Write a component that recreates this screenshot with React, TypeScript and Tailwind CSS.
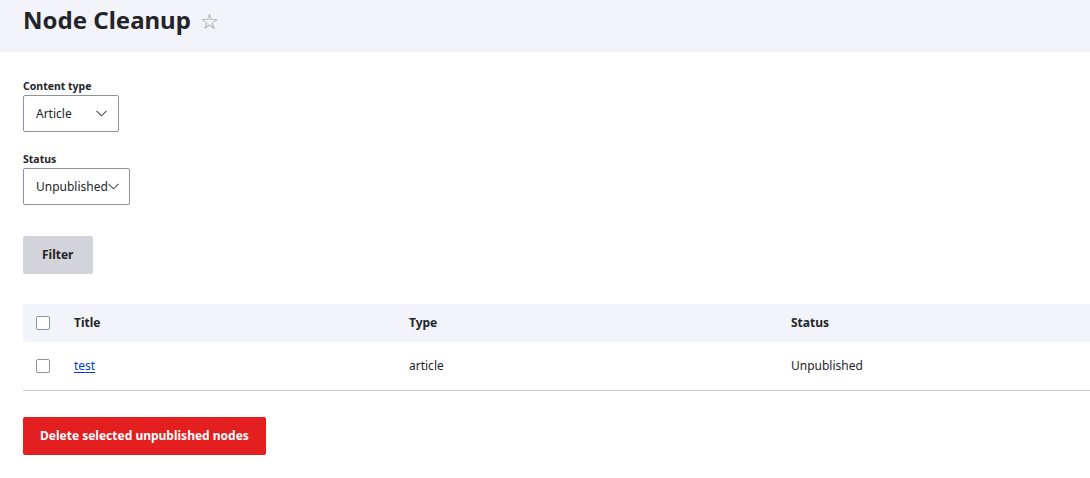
import { useState } from "react";

const font = { fontFamily: '"Noto Sans", "DejaVu Sans", sans-serif' };

function Chevron() {
  return (
    <svg width="11" height="7" viewBox="0 0 11 7" className="shrink-0">
      <path d="M0.5 0.8 L5.5 5.8 L10.5 0.8" fill="none" stroke="#4a4c55" strokeWidth="1.1" />
    </svg>
  );
}

function Select({ value, width }: { value: string; width: string }) {
  return (
    <div
      className={`flex h-[37px] items-center justify-between rounded-[2px] border border-[#8e929c] bg-white pl-[12px] pr-[11px] text-[12px] text-[#232429] ${width}`}
    >
      <span>{value}</span>
      <Chevron />
    </div>
  );
}

function Checkbox({ checked, onChange }: { checked: boolean; onChange: () => void }) {
  return (
    <button
      onClick={onChange}
      className="flex h-[14px] w-[14px] items-center justify-center rounded-[2px] border border-[#8e929c] bg-white"
    >
      {checked && <span className="h-[8px] w-[8px] bg-[#003ecc]" />}
    </button>
  );
}

export default function App() {
  const [all, setAll] = useState(false);
  const [row, setRow] = useState(false);

  return (
    <div className="min-h-[478px] w-full bg-white text-[#232429]" style={font}>
      {/* Page header */}
      <div className="flex h-[52px] items-start bg-[#f3f4f9] pl-[23px] pt-[3px]">
        <h1 className="text-[24px] font-bold leading-[34px]">Node Cleanup</h1>
        <span className="ml-[9px] mt-[1px] text-[21px] leading-[34px] text-[#8d8f98]">☆</span>
      </div>

      <div className="pl-[23px] pt-[26px]">
        {/* Filters */}
        <label className="block text-[10.5px] font-bold leading-[16px]">Content type</label>
        <div className="mt-[1px]">
          <Select value="Article" width="w-[96px]" />
        </div>
        <label className="mt-[19px] block text-[10.5px] font-bold leading-[16px]">Status</label>
        <div className="mt-[1px]">
          <Select value="Unpublished" width="w-[107px]" />
        </div>

        <button className="mt-[31px] h-[38px] rounded-[2px] bg-[#d3d4d9] px-[19px] text-[12px] font-bold text-[#232429]">
          Filter
        </button>

        {/* Table */}
        <div className="mt-[30px] text-[12px]">
          <div className="grid h-[38px] grid-cols-[51px_335px_382px_1fr] items-center bg-[#f3f4f9] font-bold">
            <div className="pl-[13px] flex items-center">
              <Checkbox checked={all} onChange={() => setAll(!all)} />
            </div>
            <div>Title</div>
            <div>Type</div>
            <div>Status</div>
          </div>
          <div className="grid h-[49px] grid-cols-[51px_335px_382px_1fr] items-center border-b border-[#c9cbd1]">
            <div className="pl-[13px] flex items-center">
              <Checkbox checked={row || all} onChange={() => setRow(!row)} />
            </div>
            <div>
              <a href="#" className="text-[#003ecc] underline underline-offset-[2px]">
                test
              </a>
            </div>
            <div>article</div>
            <div>Unpublished</div>
          </div>
        </div>

        <button className="mt-[26px] h-[38px] rounded-[2px] bg-[#e3201f] px-[17px] text-[12px] font-bold text-white">
          Delete selected unpublished nodes
        </button>
      </div>
    </div>
  );
}
